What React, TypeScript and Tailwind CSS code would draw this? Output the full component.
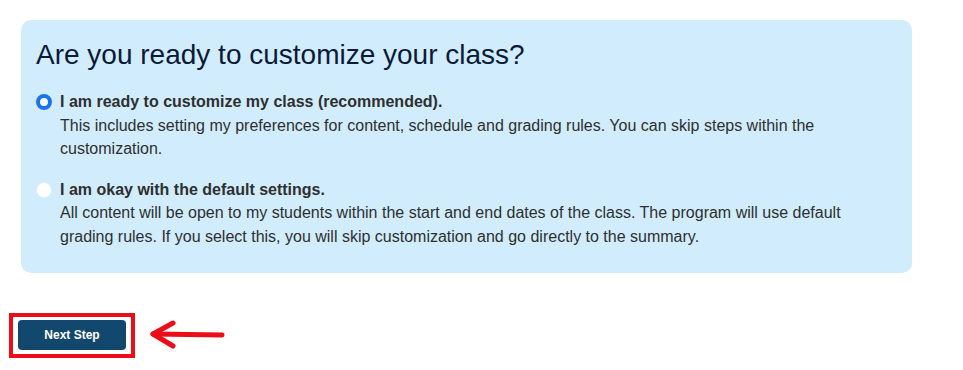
import React from "react";

function Radio({ checked }: { checked: boolean }) {
  return checked ? (
    <span className="mt-[4px] block h-[16px] w-[16px] shrink-0 rounded-full border-[4px] border-[#1a73f0] bg-white" />
  ) : (
    <span className="mt-[4px] block h-[16px] w-[16px] shrink-0 rounded-full border border-[#e6eef5] bg-white" />
  );
}

export default function App() {
  return (
    <div
      className="min-h-[370px] w-[963px] bg-white pl-[21px] pt-[20px]"
      style={{ fontFamily: '"Liberation Sans", Arial, sans-serif' }}
    >
      <div className="w-[891px] rounded-[10px] bg-[#d1edfd] pb-[25px] pl-[15px] pr-[16px] pt-[18px]">
        <h1 className="text-[28px] leading-[34px] font-normal text-[#0b1a3a]">
          Are you ready to customize your class?
        </h1>
        <div className="mt-[18px] flex flex-col gap-[17px] text-[16px] leading-[23.5px] text-[#2f2f2f]">
          <label className="flex items-start gap-[8px]">
            <Radio checked />
            <div>
              <div className="font-bold">I am ready to customize my class (recommended).</div>
              <div>
                This includes setting my preferences for content, schedule and grading rules. You can skip steps within the customization.
              </div>
            </div>
          </label>
          <label className="flex items-start gap-[8px]">
            <Radio checked={false} />
            <div>
              <div className="font-bold">I am okay with the default settings.</div>
              <div>
                All content will be open to my students within the start and end dates of the class. The program will use default grading rules. If you select this, you will skip customization and go directly to the summary.
              </div>
            </div>
          </label>
        </div>
      </div>
      <div className="-ml-[12px] mt-[40px] flex items-center gap-[15px]">
        <div className="border-[4px] border-[#ec0d18] px-[5px] pb-[4px] pt-[3px]">
          <button className="flex h-[30px] w-[108px] items-center justify-center rounded-[4px] bg-[#12476e] text-[12px] font-bold text-white">
            Next Step
          </button>
        </div>
        <svg width="76" height="30" viewBox="0 0 76 30" className="-mt-[4px]">
          <g stroke="#ec0d18" strokeWidth="5" strokeLinecap="round" strokeLinejoin="round" fill="none">
            <path d="M3 15 L72 16" />
            <path d="M23 4 L3 15 L23 27" />
          </g>
        </svg>
      </div>
    </div>
  );
}
